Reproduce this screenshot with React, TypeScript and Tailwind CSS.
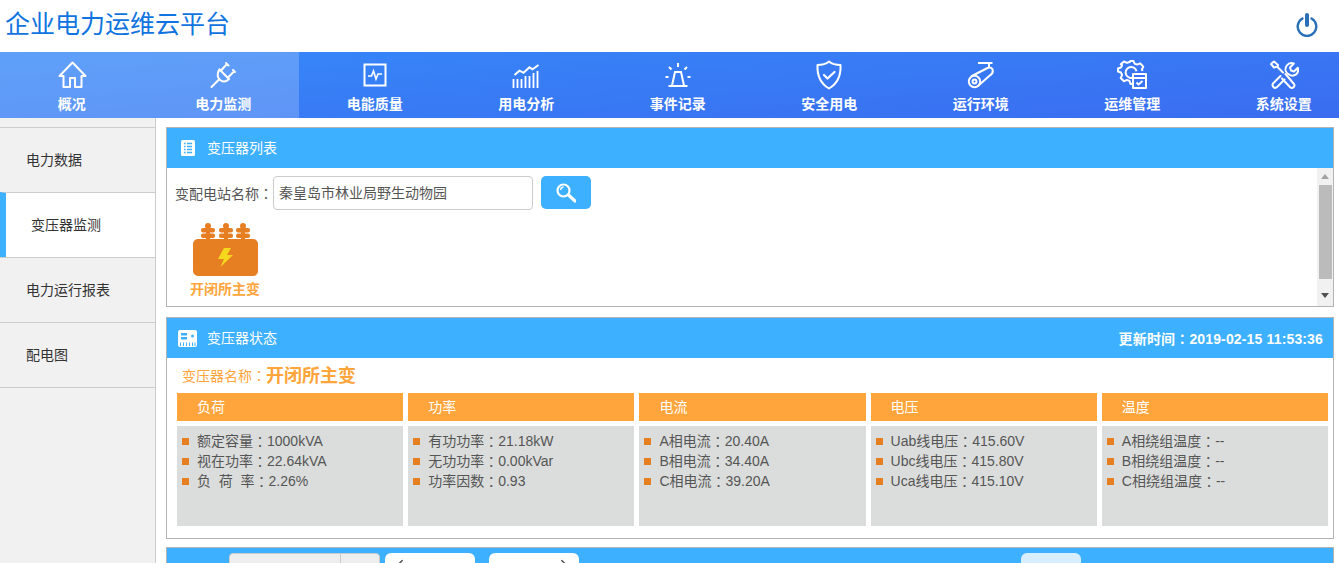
import type { ReactNode } from "react";
import { ChevronLeft, ChevronRight } from "lucide-react";

const HomeIcon = () => (
  <svg width="30" height="28" viewBox="0 0 30 28" fill="none" stroke="white" strokeWidth="2" strokeLinejoin="round">
    <path d="M15.500 1.500 2.500 15h4v11h6.500V17h5v9h6.500V15h4z" />
  </svg>
);

const PlugIcon = () => (
  <svg width="28" height="28" viewBox="0 0 28 28" fill="none" stroke="white" strokeWidth="2" strokeLinecap="round">
    <path d="M2.500 26 10 18.500" />
    <path d="M10.500 8.500 20 18c-2.800 2.800-6.200 3-8.500 1.200l-.8-.8C8 16 8 11.500 10.500 8.500z" />
    <path d="M12 9.500l6-6.500M19 16.500l6-6M17 2l2.500 2.500M24 9l2 2" />
  </svg>
);

const MonitorIcon = () => (
  <svg width="28" height="28" viewBox="0 0 28 28" fill="none" stroke="white" strokeWidth="2">
    <rect x="3.500" y="3.500" width="21" height="21" />
    <path d="M7 15h3.500l2-5 2.500 8 2-5h4" strokeWidth="1.600" />
  </svg>
);

const ChartIcon = () => (
  <svg width="30" height="28" viewBox="0 0 30 28" fill="none" stroke="white" strokeWidth="1.600">
    <path d="M3.500 14 8.500 9.700l4 2 6-5.400 3 2 6-4.300" strokeWidth="2" />
    <path d="M2.500 27v-9M6.500 27v-9M10.500 27v-9M14.500 27v-12M18.500 27v-12M22.500 27v-15M26.500 27v-17" strokeWidth="1.800" />
  </svg>
);

const AlarmIcon = () => (
  <svg width="28" height="28" viewBox="0 0 28 28" fill="none" stroke="white" strokeWidth="2">
    <path d="M8 24.500 11 11h6l3 13.500M4.500 25h19" />
    <path d="M14 2v4M5 6l2.500 2.500M23 6l-2.500 2.500M1.500 16h3M23.500 16h3" />
  </svg>
);

const ShieldIcon = () => (
  <svg width="28" height="30" viewBox="0 0 28 30" fill="none" stroke="white" strokeWidth="2" strokeLinejoin="round">
    <path d="M14 1.500C11 4 7 5 2.500 5c-.5 10 2 18 11.500 23.500C23.500 23 26 15 25.500 5 21 5 17 4 14 1.500z" />
    <path d="M9 15l3.500 3.500L19.500 12" strokeLinecap="round" strokeWidth="2.200" />
  </svg>
);

const CameraIcon = () => (
  <svg width="28" height="28" viewBox="0 0 28 28" fill="none" stroke="white" strokeWidth="2">
    <path d="M4 15.500 20.500 7c2.800-1.300 5 .2 5.300 2.500.2 2-.8 3.500-2.800 4.800L11 25" />
    <circle cx="7.500" cy="20.500" r="5.700" />
    <circle cx="7.500" cy="20.500" r="2" />
    <path d="M22 7V2M11 2h14.500" />
  </svg>
);

const GearIcon = () => (
  <svg width="30" height="30" viewBox="0 0 30 30" fill="none" stroke="white" strokeWidth="2" strokeLinejoin="round">
    <path d="M16 24h-2.500l-1-3-2.600-1.100-2.900 1.400-3.300-3.300 1.400-2.900-1.100-2.600-3-1V8.500l3-1L5.100 5 3.700 4.300 7 1.500l2.900 1.400L12.500 2l1-1h3l1 2.500 2.600 1.100L23 3.300l3.300 3.300-1.400 2.900.6 1.500" />
    <path d="M17 17.200a5.500 5.500 0 1 1 2.500-6" />
    <rect x="16" y="14" width="13" height="14" fill="#3a73f3" />
    <path d="M16 18h13" />
    <path d="M19.500 22.500l2 2 4-3.500" strokeWidth="1.800" />
  </svg>
);

const ToolsIcon = () => (
  <svg width="30" height="30" viewBox="0 0 30 30" fill="none" stroke="white" strokeWidth="2" strokeLinejoin="round" strokeLinecap="round">
    <path d="M3 3l2-1.500L9 5 8.500 7 14 12.500M7 7 5 7.500 2 4" />
    <path d="M11.500 16 4.200 23.300a2.700 2.700 0 0 0 3.800 3.800L15.500 19.500" />
    <path d="M16.500 14 25 24a2.500 2.500 0 0 1-3.800 3.200L13 18.500" />
    <path d="M18.500 13.500c-2.500-2-2.500-5.500-.7-8 1.700-2.200 4.500-3 7-2L21 7.500l1 3 3 1 3.800-3.800c1 3-.2 5.500-2 7-2.500 1.500-5.800 1-8.300-1.200z" />
  </svg>
);

const ListIcon = () => (
  <svg width="14" height="16" viewBox="0 0 14 16">
    <rect width="14" height="16" rx="1.500" fill="white" />
    <path d="M3 3.500h1.500M6 3.500h5M3 6.500h1.500M6 6.500h5M3 9.500h1.500M6 9.500h5M3 12.500h1.500M6 12.500h5" stroke="#3db0ff" strokeWidth="1.300" />
  </svg>
);

const StatusIcon = () => (
  <svg width="19" height="17" viewBox="0 0 19 17">
    <rect width="19" height="17" rx="2" fill="white" />
    <rect x="3" y="3" width="6" height="2.500" fill="#3db0ff" />
    <rect x="3" y="7" width="6" height="2.500" fill="#3db0ff" />
    <circle cx="14.500" cy="6" r="1.500" fill="#3db0ff" />
    <path d="M2.500 16v-3.500M5.500 16v-3.500M8.500 16v-3.500M11.500 16v-3.500M14.500 16v-3.500M17 16v-3.500" stroke="#3db0ff" />
  </svg>
);

const SearchIcon = () => (
  <svg width="20" height="20" viewBox="0 0 20 20" fill="none" stroke="white">
    <circle cx="7.500" cy="7.500" r="6" strokeWidth="2.200" />
    <path d="M4.500 7A3.500 3.500 0 0 1 7.500 4" strokeWidth="1.300" />
    <path d="M13 12.500l6 5.500" strokeWidth="3.200" strokeLinecap="round" />
  </svg>
);

const PowerIcon = () => (
  <svg width="22" height="24" viewBox="0 0 22 24" fill="none" stroke="#2a70b8" strokeLinecap="round">
    <path d="M6.500 5.500a9.300 9.300 0 1 0 9 0" strokeWidth="2.400" />
    <path d="M11 2v10" strokeWidth="4" />
  </svg>
);

const TransformerIcon = () => (
  <svg width="65" height="53" viewBox="0 0 65 53" fill="#e67e22">
    <rect x="0" y="16" width="65" height="37" rx="5" />
    {[15, 33, 50].map((x) => (
      <g key={x}>
        <rect x={x - 2} y="2" width="4" height="15" />
        <circle cx={x} cy="3" r="3" />
        <rect x={x - 7} y="5" width="14" height="4.500" rx="2" />
        <rect x={x - 7} y="10.500" width="14" height="4.500" rx="2" />
      </g>
    ))}
    <path d="M38 25h-7l-6 11h6l-3.500 8L40 32h-6z" fill="#f6d91f" />
  </svg>
);

// the reference shows a centred full-width colon, which the TC face has
const Colon = () => <span className="font-['Noto_Sans_CJK_TC',sans-serif]">：</span>;

const navItems: { label: string; icon: ReactNode }[] = [
  { label: "概况", icon: <HomeIcon /> },
  { label: "电力监测", icon: <PlugIcon /> },
  { label: "电能质量", icon: <MonitorIcon /> },
  { label: "用电分析", icon: <ChartIcon /> },
  { label: "事件记录", icon: <AlarmIcon /> },
  { label: "安全用电", icon: <ShieldIcon /> },
  { label: "运行环境", icon: <CameraIcon /> },
  { label: "运维管理", icon: <GearIcon /> },
  { label: "系统设置", icon: <ToolsIcon /> },
];

const sideItems = ["电力数据", "变压器监测", "电力运行报表", "配电图"];

const statusCols = [
  { title: "负荷", rows: [["额定容量", "1000kVA"], ["视在功率", "22.64kVA"], ["负  荷  率", "2.26%"]] },
  { title: "功率", rows: [["有功功率", "21.18kW"], ["无功功率", "0.00kVar"], ["功率因数", "0.93"]] },
  { title: "电流", rows: [["A相电流", "20.40A"], ["B相电流", "34.40A"], ["C相电流", "39.20A"]] },
  { title: "电压", rows: [["Uab线电压", "415.60V"], ["Ubc线电压", "415.80V"], ["Uca线电压", "415.10V"]] },
  { title: "温度", rows: [["A相绕组温度", "--"], ["B相绕组温度", "--"], ["C相绕组温度", "--"]] },
];

export default function App() {
  return (
    <div className="h-screen overflow-hidden bg-white font-['Liberation_Sans','Noto_Sans_CJK_SC',sans-serif] text-sm">
      <header className="flex h-[52px] items-center justify-between pb-[2px] pl-[5px] pr-[21px]">
        <h1 className="text-[25px] text-[#0f74e0]">企业电力运维云平台</h1>
        <PowerIcon />
      </header>

      <nav className="flex h-[66px] overflow-hidden bg-[linear-gradient(175deg,#3689f9,#3a6cf0)]">
        <div className="flex -ml-[4px]">
          {navItems.map((item, i) => (
            <div
              key={item.label}
              className={`flex h-[66px] w-[151.5px] shrink-0 flex-col items-center ${i < 2 ? "bg-white/20" : ""}`}
            >
              <div className="flex h-[42px] items-center pt-[3px]">{item.icon}</div>
              <span className="text-sm leading-[20px] font-bold text-white">{item.label}</span>
            </div>
          ))}
        </div>
      </nav>

      <div className="flex h-[445px]">
        <aside className="w-[156px] shrink-0 border-r border-[#ccc] bg-[#f1f1f1] pt-[9px]">
          <div className="border-b border-t border-[#ccc]">
            {sideItems.map((label, i) => (
              <div
                key={label}
                className={`flex items-center ${i > 0 ? "h-[65px] border-t border-[#ccc]" : "h-[64px]"} ${
                  i === 1 ? "border-l-[6px] border-l-[#3db0ff] bg-white pl-[25px]" : "pl-[26px]"
                } text-[#333]`}
              >
                {label}
              </div>
            ))}
          </div>
        </aside>

        <main className="flex min-w-0 flex-1 flex-col pl-[10px] pr-[5px] pt-[9px]">
          <section className="h-[180px] shrink-0 border border-[#b3b3b3]">
            <div className="flex h-[40px] items-center bg-[#3db0ff] pl-[14px] font-bold text-white">
              <ListIcon />
              <span className="ml-[12px] font-normal">变压器列表</span>
            </div>
            <div className="flex h-[138px]">
              <div className="flex-1 pl-[8px] pt-[8px]">
                <div className="flex items-start text-[#555]">
                  <span className="w-[98px] leading-[34px]">
                    变配电站名称
                    <Colon />
                  </span>
                  <div className="flex h-[34px] w-[260px] items-center rounded border border-[#ccc] pl-[5px]">
                    秦皇岛市林业局野生动物园
                  </div>
                  <button className="ml-[8px] flex h-[33px] w-[50px] items-center justify-center rounded-[5px] bg-[#3db0ff]">
                    <SearchIcon />
                  </button>
                </div>
                <div className="ml-[15px] mt-[12px] flex w-[70px] flex-col items-center">
                  <TransformerIcon />
                  <span className="mt-[3px] leading-[20px] font-bold whitespace-nowrap text-[#ffa53b]">开闭所主变</span>
                </div>
              </div>
              <div className="flex w-[16px] flex-col items-center bg-[#f1f1f1] pb-[8px] pt-[6px]">
                <span className="h-0 w-0 border-x-[4px] border-b-[5px] border-x-transparent border-b-[#a3a3a3]" />
                <span className="mt-[6px] h-[94px] w-[13px] bg-[#bbb]" />
                <span className="mt-auto h-0 w-0 border-x-[4px] border-t-[5px] border-x-transparent border-t-[#505050]" />
              </div>
            </div>
          </section>

          <section className="mt-[10px] h-[222px] shrink-0 border border-[#b3b3b3]">
            <div className="flex h-[40px] items-center justify-between bg-[#3db0ff] pl-[11px] pr-[10px] text-white">
              <div className="flex items-center">
                <StatusIcon />
                <span className="ml-[10px]">变压器状态</span>
              </div>
              <span className="font-bold tracking-[0.15px]">
                更新时间
                <Colon />
                2019-02-15 11:53:36
              </span>
            </div>
            <div className="flex h-[35px] items-center pl-[15px] text-[#ffa53b]">
              <span>
                变压器名称
                <Colon />
              </span>
              <span className="text-lg font-bold">开闭所主变</span>
            </div>
            <div className="grid grid-cols-5 gap-[5px] pl-[10px] pr-[5px]">
              {statusCols.map((col) => (
                <div key={col.title}>
                  <div className="flex h-[28px] items-center bg-[#ffa53b] pl-[20px] text-white">{col.title}</div>
                  <ul className="mt-[5px] h-[100px] bg-[#dbdddc] pl-[5px] pt-[5px] text-[#555]">
                    {col.rows.map(([name, value]) => (
                      <li key={name} className="flex h-[20px] items-center whitespace-pre">
                        <span className="mr-[8px] h-[7px] w-[7px] bg-[#e67e22]" />
                        {name}
                        <Colon />
                        {value}
                      </li>
                    ))}
                  </ul>
                </div>
              ))}
            </div>
          </section>

          <section className="mt-[8px] flex h-[40px] shrink-0 items-start border border-[#b3b3b3] bg-[#3db0ff] pl-[62px] pt-[5px]">
            <div className="flex h-[30px] w-[151px] rounded-t border border-[#ccc] bg-[#eee]">
              <span className="w-[111px] border-r border-[#ccc]" />
            </div>
            <button className="ml-[5px] flex h-[30px] w-[90px] justify-center rounded-md bg-white pt-[3px] text-[#555]">
              <ChevronLeft size={18} className="-ml-[60px]" />
            </button>
            <button className="ml-[14px] flex h-[30px] w-[90px] justify-center rounded-md bg-white pt-[3px] text-[#555]">
              <ChevronRight size={18} className="ml-[60px]" />
            </button>
            <div className="ml-[442px] h-[30px] w-[60px] rounded-md bg-[#d6eeff]" />
          </section>
        </main>
      </div>
    </div>
  );
}
